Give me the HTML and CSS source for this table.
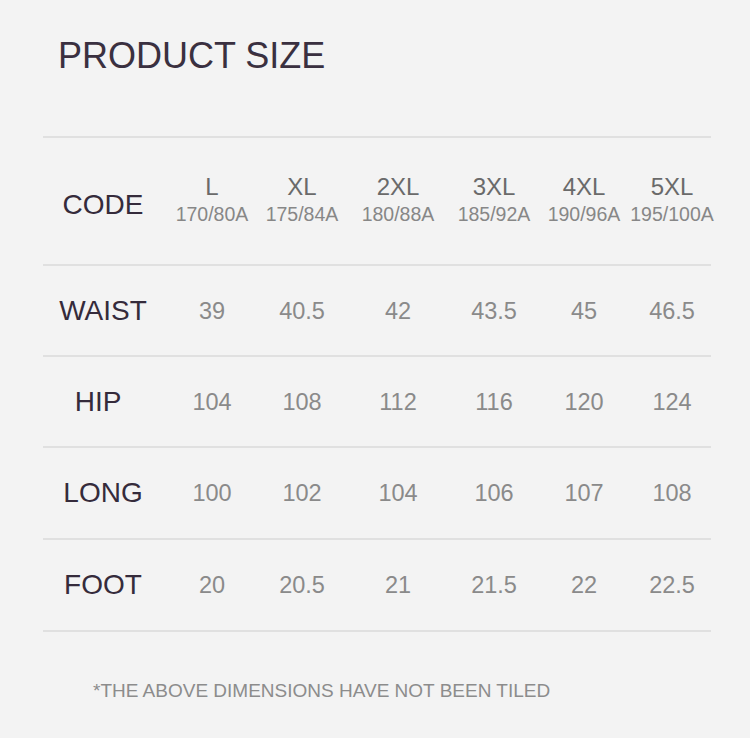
FILE: index.html
```html
<!DOCTYPE html>
<html lang="en">
<head>
<meta charset="utf-8">
<title>Product Size</title>
<link rel="stylesheet" href="styles.css">
</head>
<body>
<main class="page">
  <h1 class="title">PRODUCT SIZE</h1>
  <div class="table">
    <div class="row row-head">
      <div class="label label-head">CODE</div>
      <div class="size"><span class="size-name">L</span><span class="size-sub">170/80A</span></div>
      <div class="size"><span class="size-name">XL</span><span class="size-sub">175/84A</span></div>
      <div class="size"><span class="size-name">2XL</span><span class="size-sub">180/88A</span></div>
      <div class="size"><span class="size-name">3XL</span><span class="size-sub">185/92A</span></div>
      <div class="size"><span class="size-name">4XL</span><span class="size-sub">190/96A</span></div>
      <div class="size"><span class="size-name">5XL</span><span class="size-sub">195/100A</span></div>
    </div>
    <div class="row row-waist">
      <div class="label">WAIST</div>
      <div class="val">39</div><div class="val">40.5</div><div class="val">42</div>
      <div class="val">43.5</div><div class="val">45</div><div class="val">46.5</div>
    </div>
    <div class="row row-hip">
      <div class="label label-hip">HIP</div>
      <div class="val">104</div><div class="val">108</div><div class="val">112</div>
      <div class="val">116</div><div class="val">120</div><div class="val">124</div>
    </div>
    <div class="row row-long">
      <div class="label">LONG</div>
      <div class="val">100</div><div class="val">102</div><div class="val">104</div>
      <div class="val">106</div><div class="val">107</div><div class="val">108</div>
    </div>
    <div class="row row-foot">
      <div class="label">FOOT</div>
      <div class="val">20</div><div class="val">20.5</div><div class="val">21</div>
      <div class="val">21.5</div><div class="val">22</div><div class="val">22.5</div>
    </div>
  </div>
  <p class="note">*THE ABOVE DIMENSIONS HAVE NOT BEEN TILED</p>
</main>
</body>
</html>
```

FILE: styles.css
```css
html, body {
  margin: 0;
  padding: 0;
  background: #f3f3f3;
}

body {
  font-family: "Liberation Sans", Arial, sans-serif;
  width: 750px;
  height: 738px;
  overflow: hidden;
}

.page {
  padding: 38px 0 0 43px;
  width: 668px;
}

.title {
  margin: 0 0 62px 15px;
  font-size: 36px;
  line-height: 36px;
  font-weight: normal;
  color: #3a3040;
  letter-spacing: 0;
}

.table {
  border-bottom: 2px solid #e0e0e0;
}

.row {
  display: grid;
  grid-template-columns: 120px 98px 82px 110px 82px 98px 78px;
  align-items: center;
  border-top: 2px solid #e0e0e0;
}

.row-head { height: 126px; }
.row-waist { height: 89px; }
.row-hip { height: 89px; }
.row-long { height: 90px; }
.row-foot { height: 90px; }

.label {
  text-align: center;
  font-size: 28px;
  line-height: 28px;
  color: #352b3b;
}

.label-head {
  margin-top: 7px;
}

.label-hip {
  padding-right: 10px;
}

.size {
  display: flex;
  flex-direction: column;
  align-items: center;
  gap: 5px;
  margin-bottom: 4px;
  white-space: nowrap;
}

.size-name {
  font-size: 24px;
  line-height: 24px;
  color: #6a6a6a;
}

.size-sub {
  font-size: 19.5px;
  line-height: 20px;
  color: #878787;
}

.val {
  text-align: center;
  font-size: 23.5px;
  line-height: 24px;
  color: #8a8a8a;
}

.note {
  margin: 49px 0 0 50px;
  font-size: 19px;
  line-height: 19px;
  color: #8c8c8c;
  white-space: nowrap;
}
```
